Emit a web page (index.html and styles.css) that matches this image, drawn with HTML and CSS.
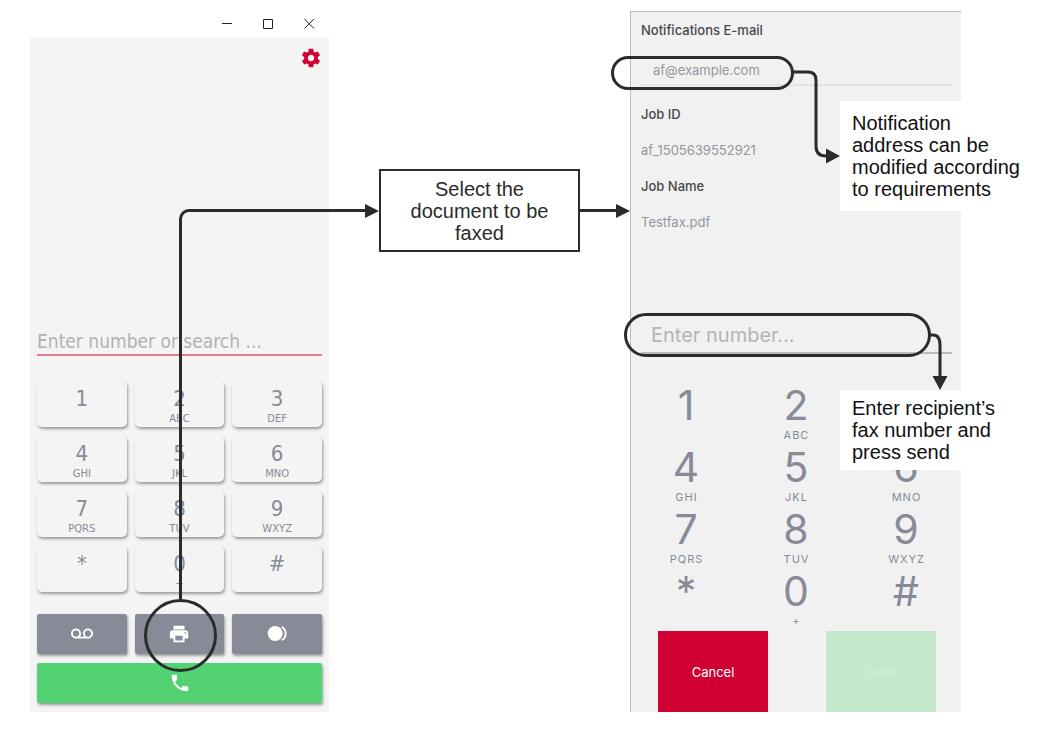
FILE: index.html
```html
<!DOCTYPE html>
<html lang="en">
<head>
<meta charset="utf-8">
<title>Sending a fax</title>
<link rel="stylesheet" href="styles.css">
</head>
<body>
<main class="flow">
  <section class="dialer" aria-label="Dialer">
    <div class="titlebar">
      <button class="win-btn" aria-label="Minimize"><svg width="11" height="11" viewBox="0 0 11 11"><path d="M0 5.500H10"/></svg></button>
      <button class="win-btn" aria-label="Maximize"><svg width="11" height="11" viewBox="0 0 11 11"><path d="M.5 1.500h9v9h-9z"/></svg></button>
      <button class="win-btn" aria-label="Close"><svg width="11" height="11" viewBox="0 0 11 11"><path d="M.5 1l9.500 9.500M10 1L.5 10.500"/></svg></button>
    </div>
    <div class="dialer-body">
      <button class="settings" aria-label="Settings"><svg class="icon" viewBox="0 0 24 24"><path d="M19.430 12.980c.04-.32.07-.64.07-.98s-.03-.66-.07-.98l2.110-1.650c.19-.15.24-.42.12-.64l-2-3.460c-.12-.22-.39-.3-.61-.22l-2.490 1c-.52-.4-1.080-.73-1.690-.98l-.38-2.650C14.460 2.180 14.250 2 14 2h-4c-.25 0-.46.18-.49.42l-.38 2.650c-.61.25-1.170.59-1.690.98l-2.490-1c-.23-.09-.49 0-.61.22l-2 3.460c-.13.22-.07.49.12.64l2.110 1.650c-.04.32-.07.65-.07.98s.03.66.07.98l-2.110 1.650c-.19.15-.24.42-.12.64l2 3.460c.12.22.39.3.61.22l2.490-1c.52.4 1.080.73 1.690.98l.38 2.650c.03.24.24.42.49.42h4c.25 0 .46-.18.49-.42l.38-2.650c.61-.25 1.170-.59 1.690-.98l2.490 1c.23.09.49 0 .61-.22l2-3.460c.12-.22.07-.49-.12-.64l-2.110-1.650zM12 15.500c-1.930 0-3.500-1.570-3.500-3.500s1.570-3.500 3.500-3.500 3.500 1.570 3.500 3.500-1.570 3.500-3.500 3.500z"/></svg></button>
      <input class="search" type="text" placeholder="Enter number or search ..." aria-label="Enter number or search">
      <div class="keys">
        <button class="key">1</button>
        <button class="key">2<small>ABC</small></button>
        <button class="key">3<small>DEF</small></button>
        <button class="key">4<small>GHI</small></button>
        <button class="key">5<small>JKL</small></button>
        <button class="key">6<small>MNO</small></button>
        <button class="key">7<small>PQRS</small></button>
        <button class="key">8<small>TUV</small></button>
        <button class="key">9<small>WXYZ</small></button>
        <button class="key">*</button>
        <button class="key">0<small>+</small></button>
        <button class="key">#</button>
      </div>
      <div class="actions">
        <button class="action" aria-label="Voicemail"><svg class="icon" viewBox="0 0 24 24"><path d="M18.500 6C15.460 6 13 8.460 13 11.500c0 1.330.47 2.550 1.260 3.500H9.740c.79-.95 1.260-2.170 1.260-3.500C11 8.460 8.540 6 5.500 6S0 8.460 0 11.500 2.460 17 5.500 17h13c3.040 0 5.500-2.460 5.500-5.500S21.540 6 18.500 6zm-13 9C3.570 15 2 13.430 2 11.500S3.570 8 5.500 8 9 9.570 9 11.500 7.430 15 5.500 15zm13 0c-1.930 0-3.500-1.570-3.500-3.500S16.570 8 18.500 8 22 9.570 22 11.500 20.430 15 18.500 15z"/></svg></button>
        <button class="action" aria-label="Fax"><svg class="icon" viewBox="0 0 24 24"><path d="M19 8H5c-1.660 0-3 1.340-3 3v6h4v4h12v-4h4v-6c0-1.660-1.340-3-3-3zm-3 11H8v-5h8v5zm3-7c-.55 0-1-.45-1-1s.45-1 1-1 1 .45 1 1-.45 1-1 1zm-1-9H6v4h12V3z"/></svg></button>
        <button class="action" aria-label="Presence"><svg class="icon" viewBox="0 0 24 24"><circle cx="10" cy="11.500" r="8.200"/><path d="M17.200 4.200a8.400 8.400 0 0 1 0 14.600" fill="none" stroke="currentColor" stroke-width="2"/></svg></button>
      </div>
      <button class="call" aria-label="Call"><svg class="icon" viewBox="0 0 24 24"><path d="M6.620 10.790c1.440 2.830 3.760 5.140 6.590 6.590l2.200-2.200c.27-.27.67-.36 1.020-.24 1.120.37 2.330.57 3.570.57.55 0 1 .45 1 1V20c0 .55-.45 1-1 1-9.390 0-17-7.610-17-17 0-.55.45-1 1-1h3.500c.55 0 1 .45 1 1 0 1.250.2 2.450.57 3.570.11.35.03.74-.25 1.020l-2.200 2.200z"/></svg></button>
    </div>
    <div class="elbow"></div>
    <div class="ring ring-fax"></div>
  </section>

  <div class="connector"></div>
  <p class="step">Select the document to be faxed</p>
  <div class="connector"></div>

  <section class="fax" aria-label="Fax">
    <form class="fax-form">
      <label class="label" for="email">Notifications E-mail</label>
      <input class="email" id="email" type="text" value="af@example.com">
      <dl class="job">
        <dt>Job ID</dt><dd>af_1505639552921</dd>
        <dt>Job Name</dt><dd>Testfax.pdf</dd>
      </dl>
      <input class="number" type="text" placeholder="Enter number..." aria-label="Enter number">
    </form>
    <div class="pad">
      <button class="digit">1</button>
      <button class="digit">2<small>ABC</small></button>
      <button class="digit">3<small>DEF</small></button>
      <button class="digit">4<small>GHI</small></button>
      <button class="digit">5<small>JKL</small></button>
      <button class="digit">6<small>MNO</small></button>
      <button class="digit">7<small>PQRS</small></button>
      <button class="digit">8<small>TUV</small></button>
      <button class="digit">9<small>WXYZ</small></button>
      <button class="digit">*</button>
      <button class="digit">0<small>+</small></button>
      <button class="digit">#</button>
    </div>
    <div class="submit">
      <button class="cancel">Cancel</button>
      <button class="send" disabled>Send</button>
    </div>

    <div class="ring ring-email"></div>
    <svg class="link link-email" width="48" height="96" viewBox="0 0 48 96"><path class="wire" d="M0 4H15Q23 4 23 12V78Q23 88 33 88H36"/><path d="M33 80.500L47 88L33 95.500z"/></svg>
    <p class="note note-email">Notification address can be modified according to requirements</p>

    <div class="ring ring-number"></div>
    <svg class="link link-number" width="18" height="58" viewBox="0 0 18 58"><path class="wire" d="M0 2H3Q10 2 10 12V46"/><path d="M2.500 43H17.500L10 57z"/></svg>
    <p class="note note-number">Enter recipient’s fax number and press send</p>
  </section>
</main>
</body>
</html>
```
FILE: styles.css
```css
* {
  box-sizing: border-box;
}

body {
  margin: 0;
  background: #fff;
  font-family: "Liberation Sans", Arial, sans-serif;
}

button,
input {
  margin: 0;
  padding: 0;
  border: 0;
  border-radius: 0;
  background: none;
  font: inherit;
  color: inherit;
}

p, dl, dd {
  margin: 0;
}

.flow {
  display: grid;
  grid-template-columns: minmax(299px, 299fr) minmax(50px, 50fr) 201px minmax(50px, 50fr) minmax(331px, 331fr);
  padding: 11px 102px 19px 30px;
}

.icon {
  display: block;
  width: 22px;
  height: 22px;
  fill: currentColor;
}

/* Dialer window */
.dialer {
  position: relative;
  font-family: "DejaVu Sans Condensed", "DejaVu Sans", sans-serif;
  color: #868b97;
}

.titlebar {
  display: flex;
  justify-content: flex-end;
  gap: 1px;
  height: 27px;
}

.win-btn {
  display: flex;
  align-items: center;
  justify-content: center;
  width: 40px;
  height: 24px;
}

.win-btn svg {
  fill: none;
  stroke: #222;
}

.dialer-body {
  display: flex;
  flex-direction: column;
  padding: 9px 7px;
  background: #f4f4f4;
}

.settings {
  align-self: flex-end;
  color: #d10032;
}

.search {
  width: 100%;
  height: 28px;
  margin-top: 259px;
  border-bottom: 2px solid #e67c93;
  font-size: 19px;
}

.search::placeholder {
  color: #b1b1b3;
  opacity: 1;
}

.keys,
.actions {
  display: grid;
  grid-template-columns: repeat(3, 1fr);
  gap: 9px 8px;
}

.keys {
  margin-top: 25px;
}

.key {
  display: flex;
  flex-direction: column;
  align-items: center;
  height: 46px;
  padding-top: 6px;
  border-radius: 5px;
  box-shadow: 1px 2px 3px #999;
  background: #f4f4f4;
  font-size: 22px;
  line-height: 24px;
}

.key small {
  font-family: "DejaVu Sans", sans-serif;
  font-size: 10px;
  line-height: 16px;
}

.actions {
  margin-top: 22px;
}

.action,
.call {
  display: flex;
  align-items: center;
  justify-content: center;
  height: 40px;
  border-radius: 2px;
  box-shadow: 1px 2px 3px #999;
  background: #868b97;
  color: #fff;
}

.call {
  margin-top: 9px;
  background: #53d274;
}

/* Step box and connectors */
.step {
  align-self: start;
  margin-top: 158px;
  padding: 7px 24px 6px;
  border: 2px solid #2b2b2b;
  font-size: 20px;
  line-height: 22px;
  text-align: center;
  color: #2b2b2b;
}

.connector {
  display: flex;
  align-items: center;
  align-self: start;
  height: 15px;
  margin-top: 192px;
}

.connector::before {
  content: "";
  flex: 1;
  height: 3px;
  background: #2b2b2b;
}

.connector::after {
  content: "";
  border: solid transparent;
  border-width: 7px 0 7px 14px;
  border-left-color: #2b2b2b;
}

.elbow {
  position: absolute;
  top: 198px;
  right: 0;
  bottom: 112px;
  left: calc(50% - 1px);
  border: solid #2b2b2b;
  border-width: 3px 0 0 3px;
  border-top-left-radius: 10px;
}

.ring {
  position: absolute;
  border: 3px solid #2b2b2b;
  border-radius: 40px;
}

.ring-fax {
  bottom: 40px;
  left: calc(50% - 36px);
  width: 73px;
  height: 73px;
}

/* Fax screen */
.fax {
  position: relative;
  display: flex;
  flex-direction: column;
  border: solid #bcbcbe;
  border-width: 1px 0 0 1px;
  background: #f1f1f1;
  font-family: Inter, sans-serif;
  color: #868b97;
}

.fax-form {
  display: flex;
  flex-direction: column;
  padding: 0 9px 0 10px;
  font-size: 13px;
}

.label,
.job {
  line-height: 36px;
}

.label,
.job dt {
  color: #48484c;
  font-weight: 500;
}

.email {
  height: 30px;
  margin-top: 8px;
  padding-left: 12px;
  border-bottom: 2px solid #e3e3e4;
}

.job {
  margin-top: 10px;
}

.job dd {
  color: #9396a0;
}

.email {
  color: #9396a0;
}

.number {
  height: 37px;
  margin-top: 77px;
  padding-left: 10px;
  border-bottom: 2px solid #bbbbc0;
  font-size: 20px;
}

.number::placeholder {
  color: #b4b4b8;
  opacity: 1;
}

.pad {
  display: grid;
  grid-template-columns: repeat(3, 1fr);
  margin-top: 29px;
}

.digit {
  display: flex;
  flex-direction: column;
  align-items: center;
  height: 62px;
  padding-top: 1px;
  font-size: 41px;
  line-height: 42px;
}

.digit small {
  padding-left: 1px;
  font-size: 11px;
  line-height: 18px;
  letter-spacing: 1px;
}

.submit {
  display: flex;
  justify-content: space-between;
  padding: 0 25px 0 27px;
  font-size: 13px;
}

.cancel,
.send {
  width: 110px;
  height: 81px;
  background: #d10032;
  color: #fff;
}

.send {
  background: #c5e8cc;
  color: #d3eed9;
}

/* Annotations over the fax screen */
.ring-email {
  top: 44px;
  left: -20px;
  width: 183px;
  height: 34px;
}

.ring-number {
  top: 301px;
  right: 30px;
  left: -7px;
  height: 44px;
}

.link {
  position: absolute;
  fill: #2b2b2b;
}

.wire {
  fill: none;
  stroke: #2b2b2b;
  stroke-width: 3;
}

.link-email {
  top: 56px;
  left: 162px;
}

.link-number {
  top: 321px;
  right: 13px;
}

.note {
  position: absolute;
  background: #fff;
  font-family: "Liberation Sans", Arial, sans-serif;
  font-size: 20px;
  line-height: 22px;
  color: #111;
}

.note-email {
  top: 89px;
  right: -63px;
  width: 184px;
  padding: 11px 0 11px 12px;
}

.note-number {
  top: 378px;
  right: -63px;
  width: 184px;
  padding: 7px 24px 7px 12px;
}
```
